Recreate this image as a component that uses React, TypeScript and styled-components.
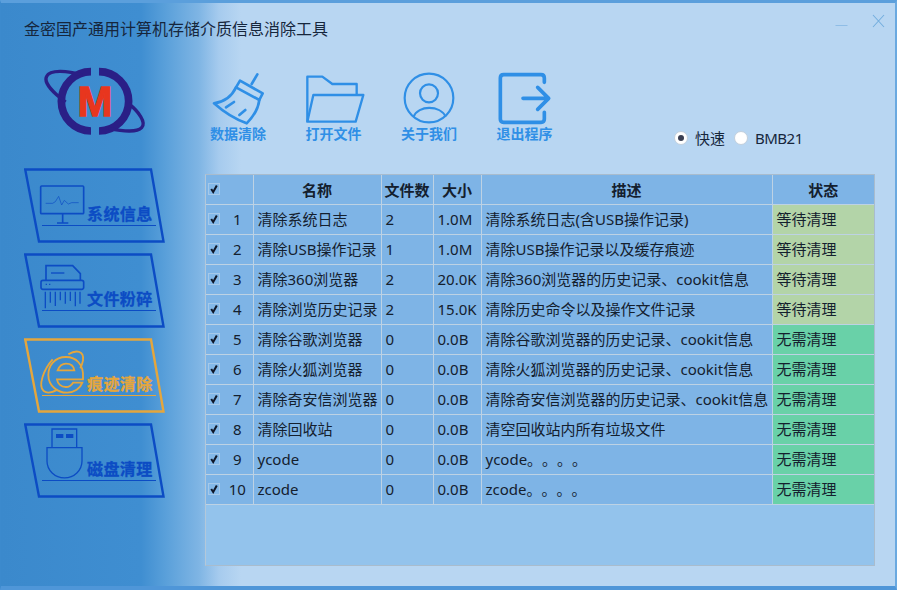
import styled, { createGlobalStyle } from 'styled-components';

const CJK = `"Noto Sans", "Noto Sans CJK SC", sans-serif`;

const GlobalStyle = createGlobalStyle`
    html, body {
        margin: 0;
        padding: 0;
        font-family: ${CJK};
        text-spacing-trim: space-all;
    }
`;

const Window = styled.div`
    box-sizing: border-box;
    width: 897px;
    height: 590px;
    display: flex;
    flex-direction: column;
    overflow: hidden;
    border-style: solid;
    border-color: #5b9fdc #6aa9e0 #4f96d8 #3c8acd;
    border-width: 3px 2px 4px 1px;
    background: linear-gradient(90deg, #3b89cc 0, #3f8ed1 140px, #5aa0da 165px, #7fb5e4 198px, #a6cbee 218px, #b8d6f2 240px);
`;

const TitleBar = styled.div`
    height: 57px;
    box-sizing: border-box;
    flex: none;
    display: flex;
    align-items: flex-start;
    justify-content: space-between;
    padding: 14px 10px 0 23px;
`;

const Title = styled.div`
    font-size: 16px;
    line-height: 24px;
    color: #16263c;
`;

const WindowButtons = styled.div`
    display: flex;
    gap: 24px;
    align-items: flex-start;
    margin-top: -3px;
`;

const Sidebar = styled.div`
    width: 204px;
    flex: none;
    display: flex;
    flex-direction: column;
    padding-left: 23px;
    box-sizing: border-box;
`;

const Logo = styled.svg`
    width: 110px;
    height: 77px;
    margin: 3px 0 28px 16px;
    display: block;
`;

const NavList = styled.div`
    display: flex;
    flex-direction: column;
    gap: 10px;
`;

const NavButton = styled.div<{ $active?: boolean }>`
    position: relative;
    width: 141px;
    height: 75px;
    box-sizing: border-box;
    padding: 0 9px 17px 15px;
    display: flex;
    align-items: flex-end;
    color: ${p => (p.$active ? '#e5a63c' : '#0c4cc4')};
`;

const NavFrame = styled.svg`
    position: absolute;
    inset: 0;
    width: 141px;
    height: 75px;
`;

const NavRow = styled.div`
    flex: 1;
    display: flex;
    align-items: flex-end;
    height: 50px;
    position: relative;
    padding-bottom: 1px;

    &::after {
        content: '';
        position: absolute;
        left: 3px;
        right: 0;
        bottom: 0;
        height: 1px;
        background: currentColor;
    }
`;

const NavIcon = styled.svg`
    width: 48px;
    height: 50px;
    flex: none;
    overflow: visible;
`;

const NavLabel = styled.span`
    font-size: 16px;
    line-height: 22px;
    font-weight: 700;
    letter-spacing: 0.4px;
    white-space: nowrap;
    -webkit-text-stroke: 0.3px currentColor;
`;

const Body = styled.div`
    flex: 1;
    display: flex;
    min-height: 0;
`;

const Main = styled.div`
    flex: 1;
    display: flex;
    flex-direction: column;
    padding-right: 20px;
    min-width: 0;
`;

const Toolbar = styled.div`
    height: 114px;
    flex: none;
    display: flex;
    align-items: flex-start;
    padding: 12px 0 0 5px;
    box-sizing: border-box;
`;

const ToolGroup = styled.div`
    display: flex;
    gap: 39.5px;
`;

const Tool = styled.div`
    width: 56px;
    display: flex;
    flex-direction: column;
    align-items: center;
    color: #2f8fe6;
`;

const ToolIcon = styled.svg`
    width: 60px;
    height: 52px;
    display: block;
    overflow: visible;
`;

const ToolLabel = styled.span`
    font-size: 14px;
    line-height: 20px;
    font-weight: 700;
    white-space: nowrap;
`;

const RadioGroup = styled.div`
    margin: 55px 0 0 auto;
    width: 201px;
    display: flex;
    align-items: center;
    font-size: 15px;
    line-height: 22px;
    color: #16263c;
`;

const Radio = styled.span<{ $checked?: boolean }>`
    width: 14px;
    height: 14px;
    border-radius: 50%;
    box-sizing: border-box;
    background: #fff;
    border: 1px solid #c2cfdc;
    display: inline-flex;
    align-items: center;
    justify-content: center;
    margin-right: 7px;

    &::after {
        content: '';
        width: 6px;
        height: 6px;
        border-radius: 50%;
        background: ${p => (p.$checked ? '#3a3f52' : 'transparent')};
    }
`;

const RadioText = styled.span<{ $latin?: boolean }>`
    margin-right: 9px;
    letter-spacing: ${p => (p.$latin ? '-0.5px' : '0')};
`;

const TablePanel = styled.div`
    height: 392px;
    box-sizing: border-box;
    flex: none;
    background: #93c3ec;
    border: 1px solid #a9bccd;
    border-left-color: #b3c8da;
    overflow: hidden;
`;

const Table = styled.table`
    width: 668px;
    table-layout: fixed;
    border-collapse: collapse;
    font-size: 15px;
    color: #14202e;
`;

const HeadCell = styled.th`
    height: 28px;
    padding: 0 0 1px;
    background: #7eb4e6;
    border: 1px solid #bdd2e4;
    border-top: none;
    font-weight: 700;
    font-size: 15px;
    text-align: center;

    &:first-child { border-left: none; }
    &:last-child { border-right: none; }
`;

const Cell = styled.td<{ $bg?: string }>`
    height: 27px;
    padding: 0 3px 2px 4px;
    box-sizing: content-box;
    background: ${p => p.$bg || '#7eb4e6'};
    border: 1px solid #bdd2e4;
    text-align: left;
    white-space: nowrap;
    overflow: hidden;

    &:first-child { border-left: none; padding-left: 3px; }
    &:last-child { border-right: none; }
`;

const CheckCell = styled.div<{ $head?: boolean }>`
    display: flex;
    align-items: center;
    height: 100%;
    padding-left: ${p => (p.$head ? '3px' : '0')};
`;

const CheckBox = styled.span`
    width: 12px;
    height: 12px;
    flex: none;
    margin-left: -1px;
    box-sizing: border-box;
    border: 1px solid #a5c9ea;
    background: #84b9e9;
    display: inline-flex;
    align-items: center;
    justify-content: center;
`;

const RowNumber = styled.span`
    flex: 1;
    text-align: center;
    padding-left: 5px;
`;

const Check = () => (
    <CheckBox>
        <svg width="10" height="10" viewBox="0 0 10 10">
            <path d="M2.2 5 L4.2 8 L7.8 1.5" fill="none" stroke="#10182a" strokeWidth="2" />
        </svg>
    </CheckBox>
);

const WAITING = '#b3d4a8';
const CLEAN = '#69d1a8';

const rows = [
    { name: '清除系统日志', count: '2', size: '1.0M', desc: '清除系统日志(含USB操作记录)', status: '等待清理' },
    { name: '清除USB操作记录', count: '1', size: '1.0M', desc: '清除USB操作记录以及缓存痕迹', status: '等待清理' },
    { name: '清除360浏览器', count: '2', size: '20.0K', desc: '清除360浏览器的历史记录、cookit信息', status: '等待清理' },
    { name: '清除浏览历史记录', count: '2', size: '15.0K', desc: '清除历史命令以及操作文件记录', status: '等待清理' },
    { name: '清除谷歌浏览器', count: '0', size: '0.0B', desc: '清除谷歌浏览器的历史记录、cookit信息', status: '无需清理' },
    { name: '清除火狐浏览器', count: '0', size: '0.0B', desc: '清除火狐浏览器的历史记录、cookit信息', status: '无需清理' },
    { name: '清除奇安信浏览器', count: '0', size: '0.0B', desc: '清除奇安信浏览器的历史记录、cookit信息', status: '无需清理' },
    { name: '清除回收站', count: '0', size: '0.0B', desc: '清空回收站内所有垃圾文件', status: '无需清理' },
    { name: 'ycode', count: '0', size: '0.0B', desc: 'ycode。。。。', status: '无需清理' },
    { name: 'zcode', count: '0', size: '0.0B', desc: 'zcode。。。。', status: '无需清理' },
];

const columns = [47, 128, 52, 48, 291, 102];

const navItems = [
    {
        label: '系统信息',
        viewBox: '84 42 144 150',
        icon: (
            <>
                <rect x="89" y="75" width="129" height="83" rx="3" fill="none" stroke="currentColor" strokeWidth="5" />
                <path d="M155 158 V185 M138 186 H172" fill="none" stroke="currentColor" strokeWidth="5" />
                <path d="M104 127 H125 L133 122 L143 106 L152 132 L160 118 L172 129 L182 125 H203" fill="none" stroke="currentColor" strokeWidth="2" />
            </>
        ),
    },
    {
        label: '文件粉碎',
        viewBox: '84 297 144 150',
        icon: (
            <>
                <path d="M105 357 V314 H185 L208 338 V357" fill="none" stroke="currentColor" strokeWidth="5" />
                <path d="M120 336 H160" fill="none" stroke="currentColor" strokeWidth="4" />
                <rect x="90" y="358" width="128" height="27" rx="6" fill="none" stroke="currentColor" strokeWidth="5" />
                <path d="M104 370 H108 M114 370 H118" stroke="currentColor" strokeWidth="4" />
                <path d="M103 392 V442 M118 392 V425 M133 392 V435 M148 392 V418 M163 392 V428 M178 392 V420 M193 392 V436 M207 392 V428" fill="none" stroke="currentColor" strokeWidth="4" />
            </>
        ),
    },
    {
        label: '痕迹清除',
        active: true,
        viewBox: '84 42 144 150',
        icon: (
            <g fill="none" stroke="currentColor" strokeWidth="5.5">
                <path d="M216 138 C218 100 195 78 165 78 C130 78 112 105 112 132 C112 165 140 185 168 185 C190 185 208 172 214 155 H186 C180 165 172 168 165 168 C150 168 140 158 138 145 H216 Z" />
                <path d="M140 118 C145 105 155 98 165 98 C178 98 188 105 190 118 Z" />
                <path d="M172 70 C195 56 220 58 216 88 C214 98 212 104 208 112" />
                <path d="M125 85 C98 115 80 165 98 180 C108 188 125 184 140 176" />
            </g>
        ),
    },
    {
        label: '磁盘清理',
        viewBox: '84 297 144 150',
        icon: (
            <>
                <path d="M123 350 V294 H197 V350" fill="none" stroke="currentColor" strokeWidth="4" />
                <rect x="135" y="309" width="22" height="12" fill="currentColor" />
                <rect x="165" y="309" width="22" height="12" fill="currentColor" />
                <path d="M108 350 H213 V390 A52 50 0 0 1 108 390 Z" fill="none" stroke="currentColor" strokeWidth="4" />
            </>
        ),
    },
];

const App = () => (
    <Window>
        <GlobalStyle />
        <TitleBar>
            <Title>金密国产通用计算机存储介质信息消除工具</Title>
            <WindowButtons>
                <svg width="13" height="14" viewBox="0 0 13 14">
                    <path d="M0.5 11.5 H12.5" stroke="#8fbde6" strokeWidth="1" />
                </svg>
                <svg width="13" height="14" viewBox="0 0 13 14">
                    <path d="M1 1 L12 13 M12 1 L1 13" stroke="#74aede" strokeWidth="1.1" fill="none" />
                </svg>
            </WindowButtons>
        </TitleBar>
        <Body>
            <Sidebar>
                <Logo viewBox="120 190 330 231">
                    <g fill="none" stroke="#2a1f86">
                        <path d="M273 216 A89 89 0 0 0 273 394" strokeWidth="23" />
                        <path d="M297 216 A89 89 0 0 1 297 394" strokeWidth="23" />
                        <path d="M197 307 C160 280 130 248 140 230 C150 210 200 212 246 226" strokeWidth="10" />
                        <path d="M386 312 C415 335 440 368 425 384 C410 400 370 395 325 386" strokeWidth="10" />
                    </g>
                    <text x="285" y="350" textAnchor="middle" fontFamily="Liberation Sans, sans-serif" fontWeight="700" fontSize="126" fill="#e8361e" stroke="#e8361e" strokeWidth="4">M</text>
                </Logo>
                <NavList>
                    {navItems.map(item => (
                        <NavButton key={item.label} $active={item.active}>
                            <NavFrame viewBox="0 0 141 75">
                                <path d="M1.2 1.5 H127 L139.5 73.5 H15 Z" fill="none" stroke="currentColor" strokeWidth="2.4" />
                            </NavFrame>
                            <NavRow>
                                <NavIcon viewBox={item.viewBox}>{item.icon}</NavIcon>
                                <NavLabel>{item.label}</NavLabel>
                            </NavRow>
                        </NavButton>
                    ))}
                </NavList>
            </Sidebar>
            <Main>
                <Toolbar>
                    <ToolGroup>
                        <Tool>
                            <ToolIcon viewBox="24 36 180 156">
                                <g fill="none" stroke="currentColor" strokeWidth="8" strokeLinejoin="round" strokeLinecap="round">
                                    <path d="M172 43 L155 72" />
                                    <path d="M120 62 L188 100 L178 120 L108 82 Z" />
                                    <path d="M108 82 C95 110 70 126 42 130 C70 155 100 176 140 190 C160 170 175 145 178 120" />
                                    <path d="M78 142 L102 126 M118 165 L136 150" />
                                </g>
                            </ToolIcon>
                            <ToolLabel>数据清除</ToolLabel>
                        </Tool>
                        <Tool>
                            <ToolIcon viewBox="310 36 180 156">
                                <g fill="none" stroke="currentColor" strokeWidth="7" strokeLinejoin="round">
                                    <path d="M320 185 V50 H365 L395 72 H468 V103" />
                                    <path d="M338 105 H488 L465 185 H320 Z" />
                                </g>
                            </ToolIcon>
                            <ToolLabel>打开文件</ToolLabel>
                        </Tool>
                        <Tool>
                            <ToolIcon viewBox="598 34 180 156">
                                <g fill="none" stroke="currentColor" strokeWidth="6.5">
                                    <circle cx="688" cy="112" r="73" />
                                    <circle cx="688" cy="98" r="27" />
                                    <path d="M642 168 C655 133 722 133 738 168" />
                                </g>
                            </ToolIcon>
                            <ToolLabel>关于我们</ToolLabel>
                        </Tool>
                        <Tool>
                            <ToolIcon viewBox="884 34 180 156">
                                <g fill="none" stroke="currentColor" strokeWidth="11" strokeLinecap="round" strokeLinejoin="round">
                                    <path d="M1032 65 V52 Q1032 42 1022 42 H910 Q900 42 900 52 V175 Q900 185 910 185 H1022 Q1032 185 1032 175 V155" />
                                    <path d="M968 113 H1042 M1012 80 L1045 113 L1012 146" />
                                </g>
                            </ToolIcon>
                            <ToolLabel>退出程序</ToolLabel>
                        </Tool>
                    </ToolGroup>
                    <RadioGroup>
                        <Radio $checked />
                        <RadioText>快速</RadioText>
                        <Radio />
                        <RadioText $latin>BMB21</RadioText>
                    </RadioGroup>
                </Toolbar>
                <TablePanel>
                    <Table>
                        <colgroup>
                            {columns.map((w, i) => (
                                <col key={i} style={{ width: w }} />
                            ))}
                        </colgroup>
                        <thead>
                            <tr>
                                <HeadCell>
                                    <CheckCell $head>
                                        <Check />
                                    </CheckCell>
                                </HeadCell>
                                <HeadCell>名称</HeadCell>
                                <HeadCell>文件数</HeadCell>
                                <HeadCell>大小</HeadCell>
                                <HeadCell>描述</HeadCell>
                                <HeadCell>状态</HeadCell>
                            </tr>
                        </thead>
                        <tbody>
                            {rows.map((row, i) => (
                                <tr key={row.name}>
                                    <Cell>
                                        <CheckCell>
                                            <Check />
                                            <RowNumber>{i + 1}</RowNumber>
                                        </CheckCell>
                                    </Cell>
                                    <Cell>{row.name}</Cell>
                                    <Cell>{row.count}</Cell>
                                    <Cell>{row.size}</Cell>
                                    <Cell>{row.desc}</Cell>
                                    <Cell $bg={row.status === '等待清理' ? WAITING : CLEAN}>{row.status}</Cell>
                                </tr>
                            ))}
                        </tbody>
                    </Table>
                </TablePanel>
            </Main>
        </Body>
    </Window>
);

export default App;
